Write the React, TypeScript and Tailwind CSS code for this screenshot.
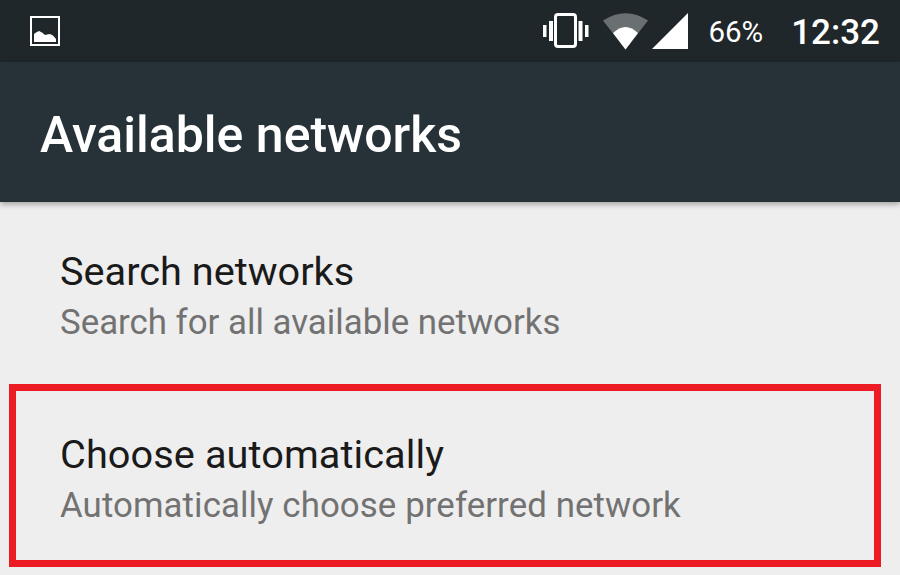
function ImageIcon() {
  return (
    <svg width="30" height="30" viewBox="0 0 30 30">
      <rect x="1" y="1" width="28" height="28" fill="none" stroke="#fff" strokeWidth="2" />
      <path d="M4 26 V18 L6 16.5 L9 15 L12 16.5 L15 19 L17 18.5 L20 18 L23 19.5 L26 23 V26 Z" fill="#fff" />
    </svg>
  )
}

function VibrateIcon() {
  return (
    <svg width="46" height="36" viewBox="0 0 46 36">
      <rect x="12.5" y="1.5" width="20" height="32" rx="2.5" fill="none" stroke="#fff" strokeWidth="3" />
      <rect x="0" y="12" width="3.5" height="12" fill="#fff" />
      <rect x="6" y="8" width="4" height="20" fill="#fff" />
      <rect x="35.5" y="8" width="4" height="20" fill="#fff" />
      <rect x="42" y="12" width="3.5" height="12" fill="#fff" />
    </svg>
  )
}

function WifiIcon() {
  return (
    <svg width="45" height="37" viewBox="0 0 45 37">
      <path d="M0 7.5 Q22.5 -7 45 7.5 L22.5 36.5 Z" fill="#6a6f71" />
      <path d="M10 20 Q22.5 8 35 20 L22.5 36.5 Z" fill="#fff" />
    </svg>
  )
}

function SignalIcon() {
  return (
    <svg width="36" height="36" viewBox="0 0 36 36">
      <path d="M0 36 L36 0 L36 36 Z" fill="#fff" />
    </svg>
  )
}

function StatusBar() {
  return (
    <div className="h-[62px] bg-[#20272b] flex items-center pl-[30px] pr-[20px] text-white">
      <ImageIcon />
      <div className="ml-auto flex items-center">
        <VibrateIcon />
        <div className="ml-[14px]"><WifiIcon /></div>
        <div className="ml-[4px]"><SignalIcon /></div>
        <span className="ml-[20px] pt-[3px] text-[29.5px] leading-none">66%</span>
        <span className="ml-[28px] pt-[3px] text-[35px] leading-none font-medium">12:32</span>
      </div>
    </div>
  )
}

interface RowProps {
  title: string
  summary: string
}

function Row({ title, summary }: RowProps) {
  return (
    <div>
      <p className="text-[39.7px] leading-[44px] text-[#1a1a1a]">{title}</p>
      <p className="text-[34.85px] leading-[42px] mt-[8px] text-[#727272]">{summary}</p>
    </div>
  )
}

export default function App() {
  return (
    <div className="w-[900px] h-[575px] overflow-hidden bg-[#eeeeee] font-['Roboto',sans-serif]">
      <StatusBar />
      <div className="h-[140px] bg-[#263238] flex items-center pl-[40px] pt-[5px] shadow-[0_2px_6px_rgba(0,0,0,0.35)]">
        <h1 className="text-[50px] font-medium text-white leading-none">Available networks</h1>
      </div>
      <div className="pl-[60px] pt-[48px]">
        <Row title="Search networks" summary="Search for all available networks" />
      </div>
      <div className="ml-[9px] mt-[40px] w-[872px] h-[183px] border-[7px] border-[#ed1c24] pl-[44px] pt-[42px] tracking-[0.08px]">
        <Row title="Choose automatically" summary="Automatically choose preferred network" />
      </div>
    </div>
  )
}
